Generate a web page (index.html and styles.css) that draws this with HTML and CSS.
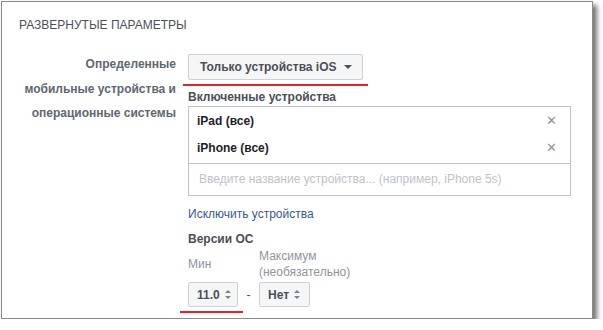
FILE: index.html
```html
<!DOCTYPE html>
<html lang="ru">
<head>
    <meta charset="UTF-8">
    <title>Развернутые параметры</title>
    <link rel="stylesheet" href="styles.css">
</head>
<body>
    <div class="card">
        <h2 class="title">Развернутые параметры</h2>

        <div class="row">
            <div class="label">Определенные мобильные устройства и операционные системы</div>

            <div class="fields">
                <div class="marked">
                    <button class="dropdown">Только устройства iOS <span class="caret"></span></button>
                </div>

                <div class="field-title">Включенные устройства</div>
                <div class="device-box">
                    <div class="tokens">
                        <div class="token"><span>iPad (все)</span><span class="remove">&#x2715;</span></div>
                        <div class="token"><span>iPhone (все)</span><span class="remove">&#x2715;</span></div>
                    </div>
                    <div class="device-input">Введите название устройства... (например, iPhone 5s)</div>
                </div>

                <a class="link" href="#">Исключить устройства</a>

                <div class="field-title os-title">Версии ОС</div>
                <div class="versions">
                    <div class="ver-label">Мин</div>
                    <div></div>
                    <div class="ver-label">Максимум<br>(необязательно)</div>

                    <div class="marked marked-small">
                        <button class="select">11.0 <span class="updown"></span></button>
                    </div>
                    <div class="dash">-</div>
                    <div>
                        <button class="select">Нет <span class="updown"></span></button>
                    </div>
                </div>
            </div>
        </div>
    </div>
</body>
</html>
```
FILE: styles.css
```css
body {
    margin: 0;
    background: #fff;
    font-family: "Liberation Sans", Arial, sans-serif;
    font-size: 12px;
}
.card {
    box-sizing: border-box;
    margin: 1px 0 0 1px;
    width: 592px;
    height: 318px;
    border: 1px solid #8c8c8c;
    background: #fff;
    box-shadow: 4px 4px 5px rgba(0, 0, 0, 0.55);
    padding: 16px 17px;
}
.title {
    margin: 0;
    font-size: 12px;
    font-weight: normal;
    line-height: 14px;
    text-transform: uppercase;
    color: #4b4f56;
}
.row {
    display: flex;
    gap: 12px;
    margin-top: 22px;
}
.label {
    width: 157px;
    margin-top: -2px;
    text-align: right;
    font-weight: bold;
    color: #606770;
    line-height: 24.5px;
}
.fields {
    flex: 1;
    display: flex;
    flex-direction: column;
    align-items: flex-start;
}
.marked {
    position: relative;
}
.marked::after {
    content: "";
    position: absolute;
    left: -5px;
    right: -5px;
    bottom: -6px;
    height: 2px;
    background: #e2232c;
}
.marked-small::after {
    left: -8px;
    right: -5px;
}
.dropdown, .select {
    display: flex;
    align-items: center;
    font-family: inherit;
    font-size: 12px;
    font-weight: bold;
    color: #4b4f56;
    background: #f5f6f7;
    border: 1px solid #ced0d4;
    border-radius: 2px;
    cursor: pointer;
}
.dropdown {
    height: 26px;
    padding: 0 10px 0 11px;
    gap: 7px;
}
.caret {
    width: 0;
    height: 0;
    border-left: 4px solid transparent;
    border-right: 4px solid transparent;
    border-top: 4px solid #4b4f56;
}
.field-title {
    margin-top: 9px;
    font-weight: bold;
    color: #4b4f56;
    line-height: 16px;
}
.device-box {
    box-sizing: border-box;
    width: 383px;
    margin-top: 1px;
    border: 1px solid #bec3c9;
}
.tokens {
    padding-bottom: 2px;
    border-bottom: 1px solid #bec3c9;
}
.token {
    display: flex;
    justify-content: space-between;
    align-items: center;
    height: 27px;
    padding: 0 13px 0 8px;
    font-weight: bold;
    color: #1d2129;
}
.remove {
    font-size: 13px;
    font-weight: normal;
    color: #90949c;
}
.device-input {
    height: 31px;
    line-height: 31px;
    padding-left: 10px;
    color: #bec3c9;
}
.link {
    margin-top: 10px;
    line-height: 16px;
    color: #365899;
    text-decoration: none;
}
.os-title {
    margin-top: 9px;
}
.versions {
    display: grid;
    grid-template-columns: 50px 21px auto;
    align-items: center;
    margin-top: 1px;
    row-gap: 2px;
}
.ver-label {
    color: #90949c;
    line-height: 16px;
}
.select {
    height: 25px;
    padding: 0 8px;
    gap: 5px;
}
.versions .marked .select {
    width: 50px;
}
.updown {
    position: relative;
    width: 7px;
    height: 9px;
}
.updown::before, .updown::after {
    content: "";
    position: absolute;
    left: 0;
    border-left: 3.5px solid transparent;
    border-right: 3.5px solid transparent;
}
.updown::before {
    top: 0;
    border-bottom: 3.5px solid #7d8188;
}
.updown::after {
    bottom: 0;
    border-top: 3.5px solid #7d8188;
}
.dash {
    text-align: center;
    color: #4b4f56;
}
```
